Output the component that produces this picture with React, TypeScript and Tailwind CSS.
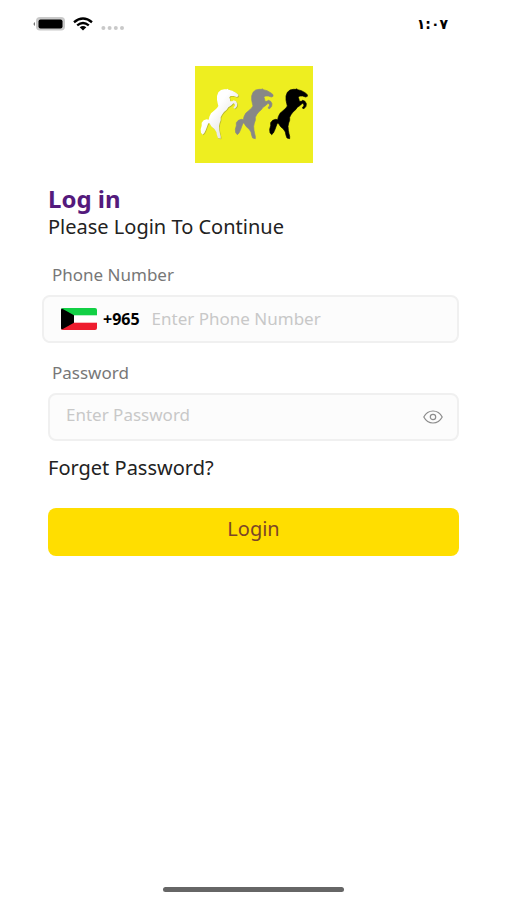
import { useState } from "react";

const HORSE =
    "M300 90 L310 88 L318 88 L320 86 L323 89 L334 92 L345 98 L352 104 L352 109 L347 111 L338 108 L329 108 L325 112 L327 118 L328 124 L334 124 L338 121 L345 124 L349 131 L348 139 L342 146 L338 145 L338 141 L342 138 L341 132 L337 130 L332 135 L328 138 L322 142 L317 149 L309 156 L303 164 L299 172 L299 181 L296 189 L294 199 L295 211 L297 221 L299 229 L299 236 L291 234 L288 226 L286 216 L280 207 L272 200 L267 193 L264 188 L261 192 L258 200 L254 211 L250 219 L245 224 L240 218 L239 208 L242 197 L242 188 L248 181 L257 178 L263 179 L265 170 L270 160 L279 152 L288 144 L292 138 L290 130 L288 120 L288 108 L292 97 Z";

function HorseLogo() {
    return (
        <svg
            role="img"
            aria-label="Horses"
            viewBox="15 18 354 291"
            preserveAspectRatio="none"
            className="w-[118px] h-[97px] bg-[#eeee20]"
        >
            <defs>
                <linearGradient id="silver" x1="0" y1="0" x2="1" y2="1">
                    <stop offset="0.4" stopColor="#ffffff" />
                    <stop offset="1" stopColor="#d4d4d0" />
                </linearGradient>
            </defs>
            <path d={HORSE} transform="translate(-205 2)" fill="#b8b82c" />
            <path d={HORSE} transform="translate(-207 0)" fill="url(#silver)" />
            <path d={HORSE} transform="translate(-103 0)" fill="#878787" stroke="#878787" strokeWidth="2" />
            <path d={HORSE} fill="#000000" stroke="#000000" strokeWidth="2" />
        </svg>
    );
}

function StatusBar() {
    return (
        <div className="h-12 flex items-center justify-between pl-8 pr-[59px]">
            <div className="flex items-center">
                <svg viewBox="0 0 34 16" className="w-[34px] h-4" aria-hidden="true">
                    <path d="M3 6 Q0 8 3 10Z" fill="#777777" />
                    <rect x="4" y="1" width="29" height="13.5" rx="4" fill="#c9c9c9" />
                    <rect x="6.5" y="3.5" width="24" height="9" rx="2" fill="#000000" />
                </svg>
                <svg viewBox="0 0 20 14" className="w-5 h-[14px] ml-[7px]" aria-hidden="true">
                    <g fill="none" stroke="#000000" strokeWidth="2.4">
                        <path d="M1 5.2 Q10 -2 19 5.2" />
                        <path d="M4.2 8.4 Q10 3.8 15.8 8.4" />
                    </g>
                    <path d="M6.7 10.2 Q10 7.6 13.3 10.2 L10 13.5Z" fill="#000000" />
                </svg>
                <svg viewBox="0 0 24 14" className="w-6 h-[14px] ml-2" aria-hidden="true">
                    <g fill="#c9c9c9">
                        <circle cx="2.4" cy="11" r="2" />
                        <circle cx="8.6" cy="11" r="2" />
                        <circle cx="14.8" cy="11" r="2" />
                        <circle cx="21" cy="11" r="2" />
                    </g>
                </svg>
            </div>
            <span dir="ltr" className="text-sm font-bold font-['DejaVu_Sans',sans-serif] text-black">
                ١:٠٧
            </span>
        </div>
    );
}

function KuwaitFlag() {
    return (
        <svg viewBox="0 0 36 22" className="w-9 h-[22px] rounded-xs shrink-0" aria-hidden="true">
            <rect width="36" height="22" fill="#ffffff" />
            <rect width="36" height="7.3" fill="#12d045" />
            <rect y="14.7" width="36" height="7.3" fill="#ee1c2e" />
            <path d="M0 0 L13 7.3 V14.7 L0 22Z" fill="#000000" />
        </svg>
    );
}

export default function App() {
    const [phone, setPhone] = useState("");
    const [password, setPassword] = useState("");
    const [visible, setVisible] = useState(false);

    return (
        <div className="min-h-screen flex flex-col bg-white font-['Noto_Sans',sans-serif]">
            <StatusBar />

            <main className="flex-1 pt-[18px] px-12">
                <div className="flex justify-center">
                    <HorseLogo />
                </div>

                <h1 className="mt-[22px] text-2xl leading-7 font-bold text-[#541a7c]">Log in</h1>
                <p className="mt-0.5 text-[20px] leading-6 text-[#222222]">Please Login To Continue</p>

                <form onSubmit={(e) => e.preventDefault()}>
                    <label htmlFor="phone" className="block mt-6 ml-1 text-[17px] leading-6 text-[#777777]">
                        Phone Number
                    </label>
                    <div className="mt-2 -ml-1.5 h-12 flex items-center rounded-lg border-2 border-[#f0f0f0] bg-[#fcfcfc] pl-[17px]">
                        <KuwaitFlag />
                        <span className="ml-1.5 text-base leading-6 font-bold text-black">+965</span>
                        <input
                            id="phone"
                            type="tel"
                            value={phone}
                            onChange={(e) => setPhone(e.target.value)}
                            placeholder="Enter Phone Number"
                            className="ml-3 min-w-0 flex-1 bg-transparent text-[17px] outline-none placeholder:text-[#c8c8c8]"
                        />
                    </div>

                    <label htmlFor="password" className="block mt-[18px] ml-1 text-[17px] leading-6 text-[#777777]">
                        Password
                    </label>
                    <div className="mt-2 h-12 flex items-center rounded-lg border-2 border-[#f0f0f0] bg-[#fcfcfc] pl-4 pr-[14px]">
                        <input
                            id="password"
                            type={visible ? "text" : "password"}
                            value={password}
                            onChange={(e) => setPassword(e.target.value)}
                            placeholder="Enter Password"
                            className="min-w-0 flex-1 pb-1 bg-transparent text-[17px] outline-none placeholder:text-[#c8c8c8]"
                        />
                        <button type="button" aria-label="Show password" onClick={() => setVisible(!visible)}>
                            <svg
                                viewBox="0 0 20 14"
                                className="w-5 h-[14px]"
                                fill="none"
                                stroke="#8c8c8c"
                                strokeWidth="1.2"
                            >
                                <path d="M0.8 7 C5 -1 15 -1 19.2 7 C15 15 5 15 0.8 7Z" />
                                <circle cx="10" cy="7" r="2.7" />
                            </svg>
                        </button>
                    </div>

                    <a href="#forgot" className="block w-fit mt-[15px] text-[20px] leading-6 text-[#222222]">
                        Forget Password?
                    </a>
                    <button
                        type="submit"
                        className="mt-7 h-12 w-full rounded-lg bg-[#ffde00] pb-1.5 text-[20px] text-[#7b4528]"
                    >
                        Login
                    </button>
                </form>
            </main>

            <div className="mx-auto mb-2 h-[5px] w-[181px] rounded-full bg-[#666666]" />
        </div>
    );
}
